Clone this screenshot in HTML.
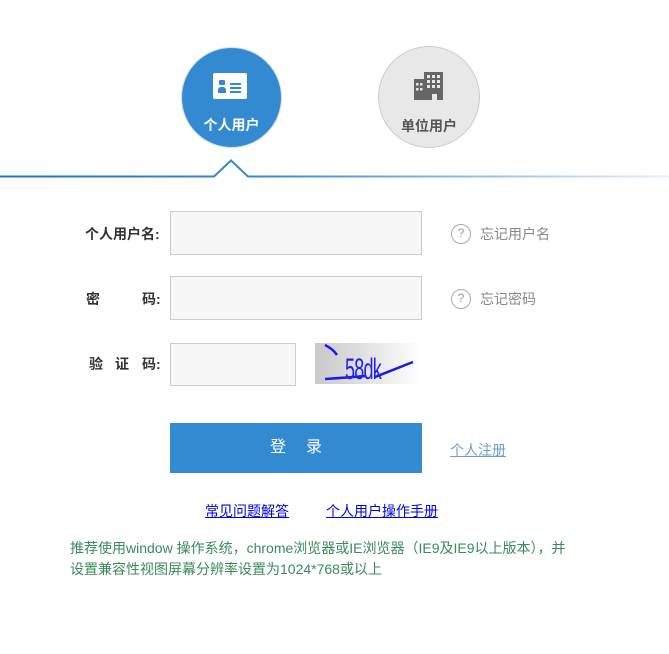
<!DOCTYPE html>
<html><head><meta charset="utf-8"><style>
*{margin:0;padding:0;box-sizing:border-box}
body{width:669px;height:654px;background:#fff;font-family:"Liberation Sans","Noto Sans CJK SC",sans-serif;position:relative;overflow:hidden}
.a{position:absolute}
.circ{border-radius:50%;text-align:center}
.inp{background:#f7f7f7;border:1px solid #ccc}
.lbl{font-size:14px;font-weight:bold;color:#333}
.q{width:20px;height:20px;border:1.5px solid #aaa;border-radius:50%;font-size:12px;color:#999;text-align:center;line-height:17px}
.hint{font-size:14px;color:#888}
</style></head><body>
<div class="a circ" style="left:181px;top:47px;width:101px;height:101px;background:#338ad0;border:1px solid #cfdff0"></div>
<div class="a" style="left:213px;top:73px;width:34px;height:26px;background:#fff;border-radius:2px"></div>
<div class="a" style="left:219px;top:80px;width:6px;height:5px;background:#338ad0;border-radius:1px"></div>
<div class="a" style="left:218px;top:87px;width:8px;height:6px;background:#338ad0;border-radius:3px 3px 0 0"></div>
<div class="a" style="left:230px;top:83px;width:11px;height:1.5px;background:#338ad0"></div>
<div class="a" style="left:230px;top:87px;width:11px;height:1.5px;background:#338ad0"></div>
<div class="a" style="left:230px;top:91px;width:11px;height:1.5px;background:#338ad0"></div>
<div class="a" style="left:181px;top:115px;width:101px;text-align:center;color:#fff;font-size:14px;font-weight:bold">个人用户</div>

<div class="a circ" style="left:378px;top:46px;width:102px;height:102px;background:#e8e8e8;border:1px solid #ccc"></div>
<svg class="a" style="left:414px;top:72px" width="30" height="28" viewBox="0 0 30 28"><path d="M0 7h10V28H0z M10 0h19v28H23v-6h-5v6h-8z" fill="#666"/><g fill="#e8e8e8"><rect x="2" y="11" width="2.5" height="2.5"/><rect x="6" y="11" width="2.5" height="2.5"/><rect x="2" y="16" width="2.5" height="2.5"/><rect x="6" y="16" width="2.5" height="2.5"/><rect x="13" y="3" width="3" height="3"/><rect x="18" y="3" width="3" height="3"/><rect x="23" y="3" width="3" height="3"/><rect x="13" y="8" width="3" height="3"/><rect x="18" y="8" width="3" height="3"/><rect x="23" y="8" width="3" height="3"/><rect x="13" y="13" width="3" height="3"/><rect x="18" y="13" width="3" height="3"/><rect x="23" y="13" width="3" height="3"/></g></svg>
<div class="a" style="left:378px;top:116px;width:102px;text-align:center;color:#555;font-size:14px;font-weight:bold">单位用户</div>

<svg class="a" style="left:0;top:155px" width="669" height="26"><defs><linearGradient id="g" x1="0" x2="1"><stop offset="0" stop-color="#1f74c0"/><stop offset="0.4" stop-color="#3a8ad0"/><stop offset="1" stop-color="#e6f0fa"/></linearGradient></defs><path d="M0 21.5H214L231 5.5L248 21.5H669" fill="none" stroke="url(#g)" stroke-width="2"/></svg>

<div class="a lbl" style="left:85px;top:224px">个人用户名:</div>
<div class="a inp" style="left:170px;top:211px;width:252px;height:44px"></div>
<div class="a q" style="left:451px;top:224px">?</div>
<div class="a hint" style="left:480px;top:224px">忘记用户名</div>

<div class="a lbl" style="left:86px;top:289px">密</div>
<div class="a lbl" style="left:142px;top:289px">码:</div>
<div class="a inp" style="left:170px;top:276px;width:252px;height:44px"></div>
<div class="a q" style="left:451px;top:289px">?</div>
<div class="a hint" style="left:480px;top:289px">忘记密码</div>

<div class="a lbl" style="left:89px;top:354px">验</div>
<div class="a lbl" style="left:115px;top:354px">证</div>
<div class="a lbl" style="left:142px;top:354px">码:</div>
<div class="a inp" style="left:170px;top:343px;width:126px;height:43px"></div>
<div class="a" style="left:315px;top:343px;width:107px;height:41px;background:linear-gradient(90deg,#c8c8c8,#fff)"></div>
<svg class="a" style="left:315px;top:343px" width="107" height="41"><g fill="none" stroke="#1a1aee" stroke-width="2.5"><path d="M10 2Q18 6 22 12"/><path d="M10 36Q40 34 50 33"/><path d="M60 34L98 19"/></g><text x="0" y="0" transform="translate(30 36) scale(0.75 1.25)" font-family="Liberation Sans,sans-serif" font-size="24" fill="#2020ee" letter-spacing="-1">58dk</text></svg>

<div class="a" style="left:170px;top:423px;width:252px;height:50px;background:#338ad0;color:#fff;font-size:16px;text-align:center;line-height:50px;letter-spacing:20px;padding-left:20px">登录</div>
<div class="a" style="left:450px;top:440px;font-size:14px;color:#6a9fd0;text-decoration:underline">个人注册</div>

<div class="a" style="left:205px;top:501px;font-size:14px;color:#00e;text-decoration:underline">常见问题解答</div>
<div class="a" style="left:326px;top:501px;font-size:14px;color:#00e;text-decoration:underline">个人用户操作手册</div>

<div class="a" style="left:70px;top:538px;font-size:14px;line-height:21px;color:#3a8a5a;width:530px">推荐使用window 操作系统，chrome浏览器或IE浏览器（IE9及IE9以上版本），并<br>设置兼容性视图屏幕分辨率设置为1024*768或以上</div>
</body></html>
